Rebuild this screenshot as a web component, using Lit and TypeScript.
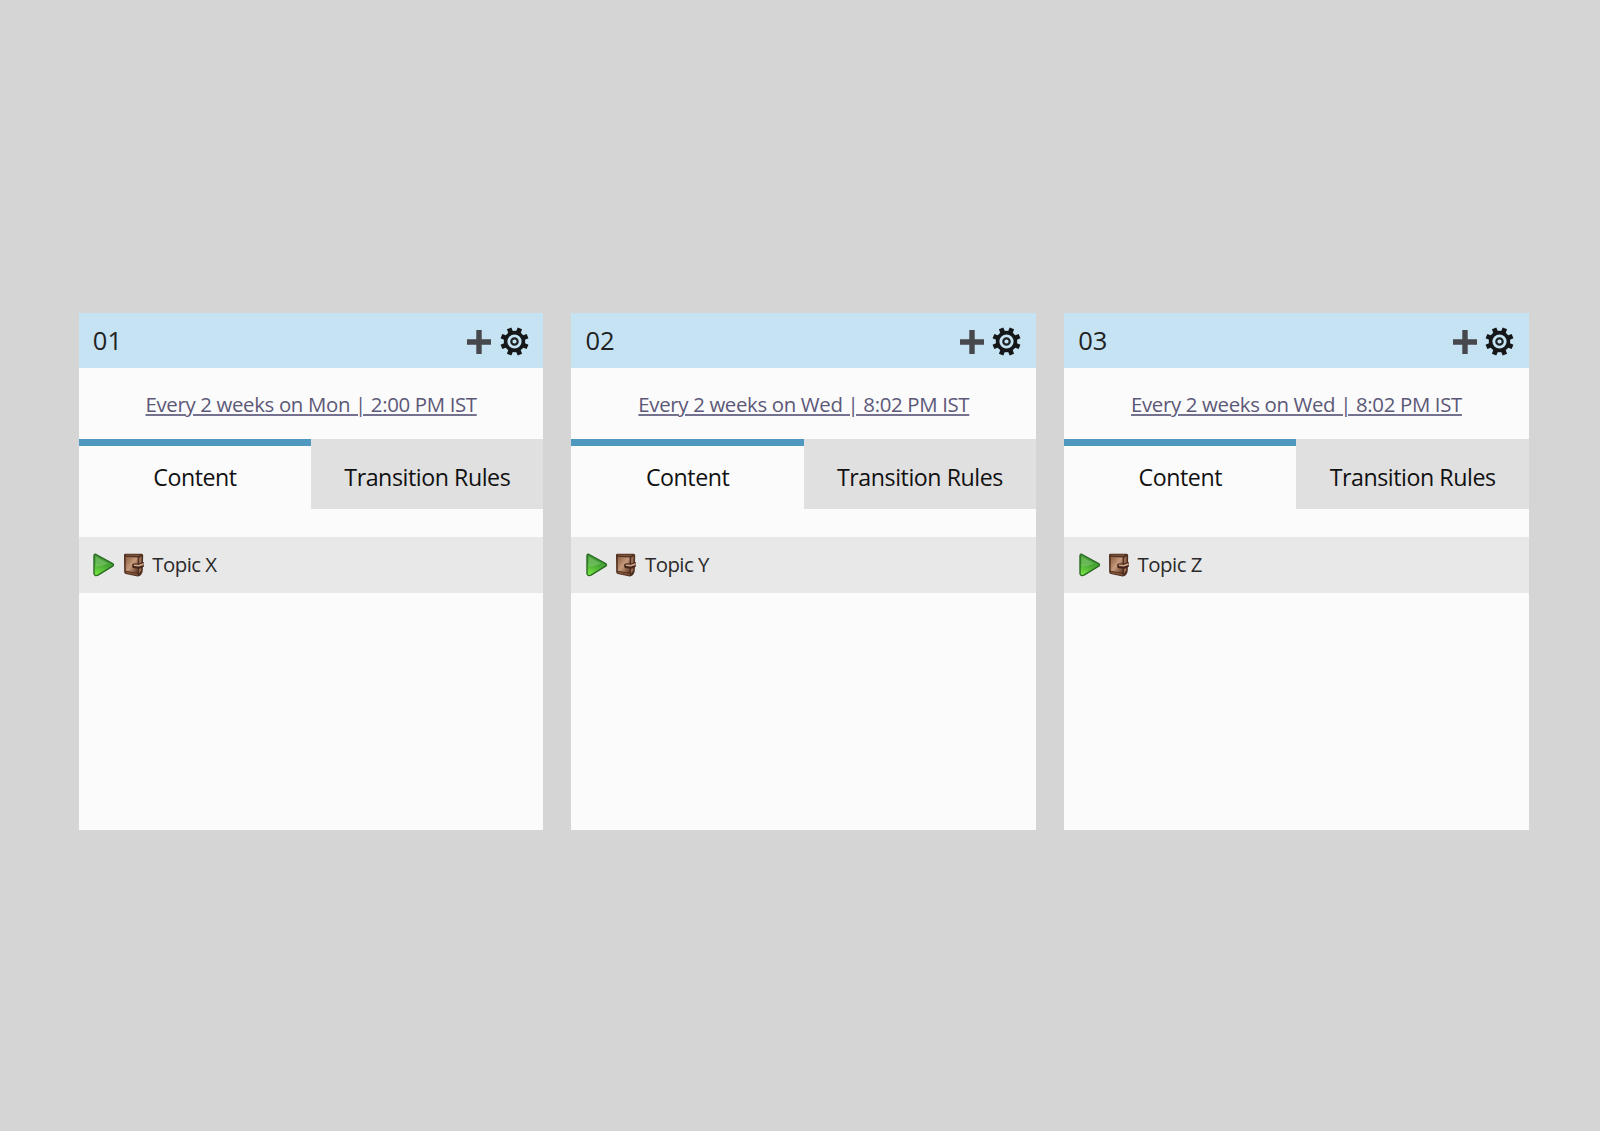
import { LitElement, html, svg, css } from 'lit';
import { customElement, property } from 'lit/decorators.js';

interface Stream {
  label: string;
  cadence: string;
  topic: string;
}

const STREAMS: Stream[] = [
  { label: '01', cadence: 'Every 2 weeks on Mon | 2:00 PM IST', topic: 'Topic X' },
  { label: '02', cadence: 'Every 2 weeks on Wed | 8:02 PM IST', topic: 'Topic Y' },
  { label: '03', cadence: 'Every 2 weeks on Wed | 8:02 PM IST', topic: 'Topic Z' },
];

const TEETH = [22.5, 67.5, 112.5, 157.5, 202.5, 247.5, 292.5, 337.5];

@customElement('stream-card')
export class StreamCard extends LitElement {
  @property({ type: String }) label = '';
  @property({ type: String }) cadence = '';
  @property({ type: String }) topic = '';

  static styles = css`
    :host {
      display: flex;
      flex-direction: column;
      background: #fbfbfb;
    }
    svg {
      display: block;
      flex: none;
    }
    .header {
      display: flex;
      align-items: center;
      height: 54.7px;
      box-sizing: border-box;
      padding: 1px 14.8px 0 14px;
      background: #c5e3f2;
    }
    .label {
      flex: 1;
      padding-bottom: 1.4px;
      font-size: 25.5px;
      line-height: 51px;
      color: #222;
    }
    .plus {
      margin-top: 1px;
    }
    .gear {
      margin-left: 7.5px;
    }
    .cadence {
      display: flex;
      align-items: center;
      justify-content: center;
      height: 70.8px;
      box-sizing: border-box;
      padding-top: 1px;
    }
    .cadence a {
      font-size: 20.4px;
      line-height: 28px;
      letter-spacing: -0.34px;
      white-space: nowrap;
      color: #5c5878;
      text-decoration: underline;
      text-decoration-color: #74728e;
      text-decoration-thickness: 1.5px;
      text-underline-offset: 2px;
    }
    .tabs {
      display: grid;
      grid-template-columns: 1fr 1fr;
      height: 69.9px;
    }
    .tab {
      display: flex;
      align-items: center;
      justify-content: center;
      padding-top: 0.5px;
      border-top: 7px solid #e0e0e0;
      background: #e0e0e0;
      font-size: 23.2px;
      letter-spacing: -0.44px;
      color: #111;
      white-space: nowrap;
    }
    .tab.active {
      border-top-color: #4f98c0;
      background: #fbfbfb;
    }
    .row {
      display: flex;
      align-items: center;
      height: 56.3px;
      margin-top: 28.5px;
      padding-left: 14.6px;
      background: #e8e8e8;
    }
    .book {
      margin-left: 7.2px;
    }
    .topic {
      margin-left: 7.7px;
      padding-bottom: 2px;
      font-size: 20.4px;
      letter-spacing: -0.52px;
      color: #2a2a2a;
    }
  `;

  render() {
    return html`
      <div class="header">
        <span class="label">${this.label}</span>
        <svg class="plus" width="26" height="26" viewBox="0 0 26 26">
          <path d="M10.3 1h5.4v9.3H25v5.4h-9.3V25h-5.4v-9.3H1v-5.4h9.3z" fill="#46484b" />
        </svg>
        <svg class="gear" width="29" height="29" viewBox="-14.5 -14.5 29 29">
          ${this.gearTeeth()}
          <circle r="8.9" fill="none" stroke="#151719" stroke-width="3.6" />
          <circle r="3.2" fill="none" stroke="#1e2124" stroke-width="2.2" />
        </svg>
      </div>
      <div class="cadence"><a>${this.cadence}</a></div>
      <div class="tabs">
        <div class="tab active">Content</div>
        <div class="tab">Transition Rules</div>
      </div>
      <div class="row">
        <svg width="22" height="24" viewBox="0 0 22 24">
          <defs>
            <linearGradient id="green" x1="0.6" y1="0" x2="0.3" y2="1">
              <stop offset="0" stop-color="#3f9137" />
              <stop offset="0.5" stop-color="#48a834" />
              <stop offset="1" stop-color="#74e640" />
            </linearGradient>
          </defs>
          <path d="M1 2.6Q1.1.5 3.1 1.5L19.7 10.6Q21.2 12 19.7 13.2L5 22.2Q1.4 23.6 1 20.5z"
            fill="url(#green)" stroke="#2b6a24" stroke-width="1.4" stroke-linejoin="round" />
          <path d="M2.6 3.5 15 10.4Q9 13.6 2.6 13.4z" fill="#9bd58b" opacity="0.4" />
        </svg>
        <svg class="book" width="22" height="24" viewBox="0 0 22 24">
          <defs>
            <linearGradient id="cover" x1="0" y1="0" x2="1" y2="1">
              <stop offset="0" stop-color="#8b5c40" />
              <stop offset="0.5" stop-color="#c69a7c" />
              <stop offset="1" stop-color="#5f3622" />
            </linearGradient>
          </defs>
          <path d="M1 2.2Q1 .8 2.4.8H18.6Q20.2.8 20.2 2.4L19.8 17Q19.6 21 16.6 23L14.6 23.4 2.8 21Q1.2 20.6 1.2 19z" fill="#4f2f1f" />
          <path d="M2.6 3.8 14.6 4.4V20L2.8 17.8z" fill="url(#cover)" />
          <path d="M2.6 18.6 14.6 21V22.4L3.2 20.2z" fill="#845338" />
          <path d="M3 1.5H18L15 3.2 3 2.7z" fill="#79513b" />
          <path d="M16 5 18.6 3 18.2 17.2 16 20.4z" fill="#9a6d52" />
          <path d="M9.2 12Q9.2 10.4 10.6 10.4L16 10.6 20.8 9V13.8L16.5 15.8 10.6 15.2Q9.2 14.8 9.2 13.6z" fill="#43241a" />
          <path d="M10.8 11.4 16 11.8 20.5 10V12L16 13.6 10.8 13z" fill="#d2a98b" />
        </svg>
        <span class="topic">${this.topic}</span>
      </div>
    `;
  }

  // one trapezoid per tooth, wider at the base than at the tip
  private gearTeeth() {
    const point = (deg: number, r: number) => {
      const a = (deg * Math.PI) / 180;
      return `${(r * Math.cos(a)).toFixed(2)} ${(r * Math.sin(a)).toFixed(2)}`;
    };
    const d = TEETH.map(
      (t) => `M${point(t - 15, 9.5)}L${point(t - 9.5, 14.3)}L${point(t + 9.5, 14.3)}L${point(t + 15, 9.5)}z`
    ).join('');
    return svg`<path d=${d} fill="#151719" />`;
  }
}

@customElement('app-root')
export class AppRoot extends LitElement {
  static styles = css`
    :host {
      display: block;
      box-sizing: border-box;
      height: 1131px;
      padding: 313.3px 71.2px 0 78.8px;
      background: #d5d5d5;
      font-family: 'Open Sans', 'Noto Sans', sans-serif;
    }
    .board {
      display: grid;
      grid-template-columns: repeat(3, 1fr);
      gap: 28px;
      height: 517px;
    }
  `;

  render() {
    return html`
      <div class="board">
        ${STREAMS.map(
          (s) => html`<stream-card .label=${s.label} .cadence=${s.cadence} .topic=${s.topic}></stream-card>`
        )}
      </div>
    `;
  }
}
